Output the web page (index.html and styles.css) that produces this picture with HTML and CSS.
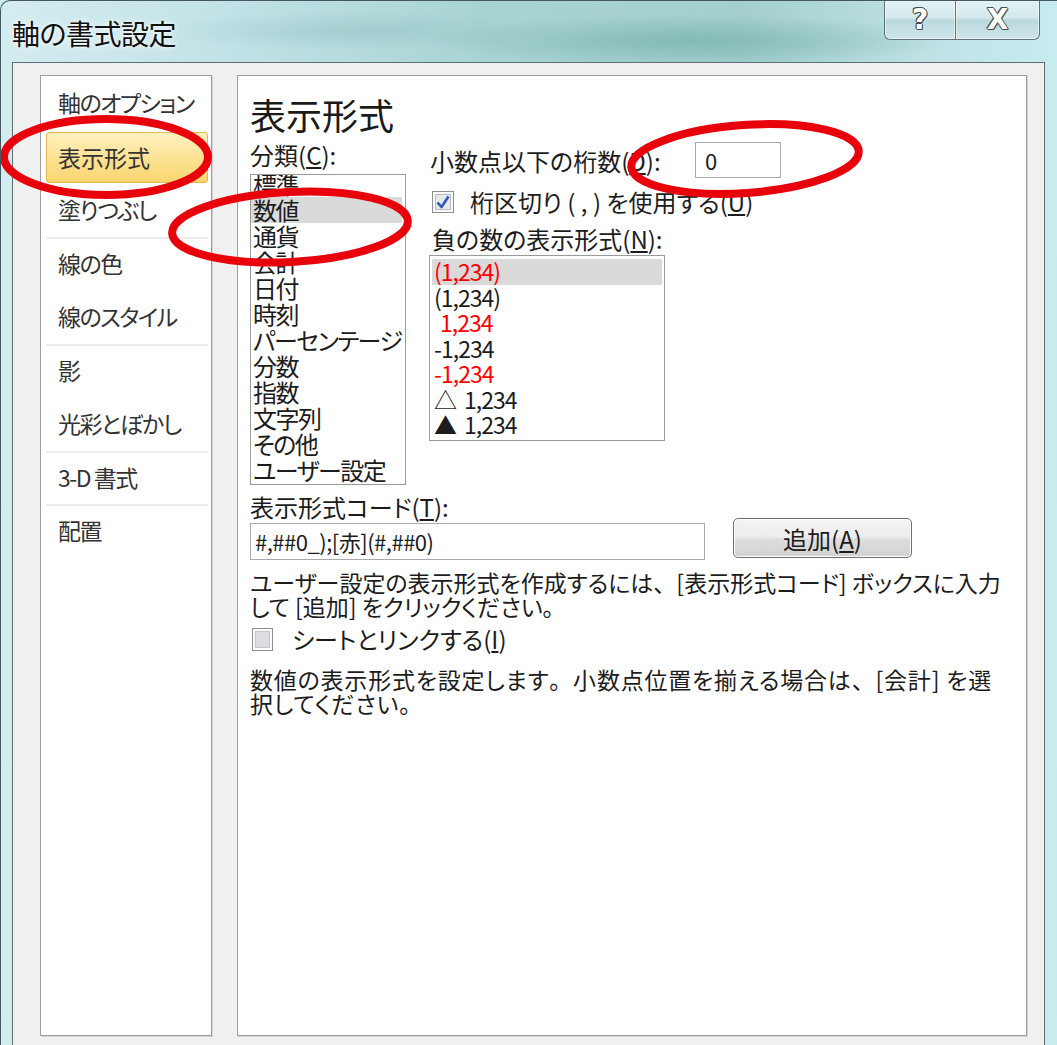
FILE: index.html
```html
<!DOCTYPE html>
<html lang="ja">
<head>
	<meta charset="UTF-8">
	<title>軸の書式設定</title>
	<link rel="stylesheet" href="styles.css">
</head>
<body>
	<div class="window">
		<div class="titlebar">
			<span class="title">軸の書式設定</span>
			<div class="caption-btns">
				<span class="cap-btn help">?</span>
				<span class="cap-btn close">X</span>
			</div>
		</div>

		<div class="client">
			<!-- 左側のメニュー -->
			<div class="panel nav-panel">
				<ul class="nav">
					<li>軸のオプション</li>
					<li class="active">表示形式</li>
					<li class="grp-end">塗りつぶし</li>
					<li>線の色</li>
					<li class="grp-end">線のスタイル</li>
					<li>影</li>
					<li class="grp-end">光彩とぼかし</li>
					<li class="grp-end">3-D 書式</li>
					<li>配置</li>
				</ul>
			</div>

			<!-- 表示形式ページ -->
			<div class="panel page">
				<h1 class="page-title">表示形式</h1>
				<div class="cols">
					<div class="cat-col">
						<div class="label">分類(<u>C</u>):</div>
						<div class="listbox cat-list">
							<ul>
								<li>標準</li>
								<li class="sel">数値</li>
								<li>通貨</li>
								<li>会計</li>
								<li>日付</li>
								<li>時刻</li>
								<li>パーセンテージ</li>
								<li>分数</li>
								<li>指数</li>
								<li>文字列</li>
								<li>その他</li>
								<li>ユーザー設定</li>
							</ul>
						</div>
					</div>
					<div class="opt-col">
						<div class="decimals">
							<span>小数点以下の桁数(<u>D</u>):</span>
							<div class="textbox small">0</div>
						</div>
						<div class="check-row first-check">
							<span class="checkbox">
								<svg width="22" height="22" viewBox="0 0 22 22">
									<rect x="0.5" y="0.5" width="21" height="21" fill="#fafafa" stroke="#8e8f8f"/>
									<rect x="3.5" y="3.5" width="15" height="15" fill="#e6e8ec" stroke="#b9bcc2"/>
									<path d="M5.5 11.5 L9.5 16 L16.5 5.5" fill="none" stroke="#2d56b8" stroke-width="2.6" stroke-linejoin="round"/>
								</svg>
							</span>
							<span>桁区切り ( , ) を使用する(<u>U</u>)</span>
						</div>
						<div class="label neg-label">負の数の表示形式(<u>N</u>):</div>
						<div class="listbox neg-list">
							<ul>
								<li class="sel red">(1,234)</li>
								<li>(1,234)</li>
								<li class="red indent">1,234</li>
								<li>-1,234</li>
								<li class="red">-1,234</li>
								<li><span class="tri">△</span>1,234</li>
								<li><span class="tri">▲</span>1,234</li>
							</ul>
						</div>
					</div>
				</div>

				<div class="label code-label">表示形式コード(<u>T</u>):</div>
				<div class="code-row">
					<div class="textbox code">#,##0_);[赤](#,##0)</div>
					<button class="btn">追加(<u>A</u>)</button>
				</div>
				<p class="desc">ユーザー設定の表示形式を作成するには<span class="fw">、</span>[表示形式コード] ボックスに入力<br>して [追加] をクリックください<span class="fw">。</span></p>
				<div class="check-row link-check">
					<span class="checkbox">
						<svg width="21" height="23" viewBox="0 0 21 23">
							<rect x="0.5" y="0.5" width="20" height="22" fill="#fafafa" stroke="#8e8f8f"/>
							<rect x="3.5" y="3.5" width="14" height="16" fill="#dcdde0" stroke="#c4c6ca"/>
						</svg>
					</span>
					<span>シートとリンクする(<u>I</u>)</span>
				</div>
				<p class="desc desc-bottom">数値の表示形式を設定します<span class="fw">。</span>小数点位置を揃える場合は<span class="fw">、</span>[会計] を選<br>択してください<span class="fw">。</span></p>
			</div>
		</div>

		<!-- 赤い丸の注釈 -->
		<svg class="marks" width="1057" height="1045" viewBox="0 0 1057 1045">
			<g fill="none" stroke="#e8000a" stroke-width="8">
				<ellipse cx="106" cy="157" rx="102" ry="38"/>
				<ellipse cx="290" cy="227" rx="118" ry="35" transform="rotate(-3 290 227)"/>
				<ellipse cx="745" cy="159" rx="114" ry="34" transform="rotate(-4 745 159)"/>
			</g>
		</svg>
	</div>
</body>
</html>
```

FILE: styles.css
```css
body{
	margin: 0;
	background: #c8eef0;
	font-family: "Noto Sans CJK JP", "Noto Sans", sans-serif;
	font-feature-settings: "palt";
	color: #1c1c1c;
}
.window{
	position: relative;
	display: flex;
	flex-direction: column;
	width: 1057px;
	height: 1045px;
	box-sizing: border-box;
	overflow: hidden;
	border-top: 1px solid #46585f;
	border-left: 1px solid #46585f;
	border-radius: 10px 0 0 0;
	background:
		radial-gradient(ellipse 260px 26px at 690px 40px, rgba(120, 178, 172, .75), rgba(120, 178, 172, 0)),
		radial-gradient(ellipse 200px 20px at 360px 30px, rgba(150, 196, 196, .6), rgba(150, 196, 196, 0)),
		linear-gradient(90deg, #d3ecf0 0%, #c3e3e7 20%, #a9d4d4 45%, #a3cfcd 70%, #bfe2e5 88%, #c6ecef 100%);
}
.titlebar{
	display: flex;
	height: 61px;
	flex-shrink: 0;
}
.title{
	align-self: center;
	padding-left: 11px;
	padding-top: 2px;
	font-size: 28px;
	letter-spacing: -.5px;
	color: #101010;
	text-shadow: 0 0 8px rgba(255, 255, 255, .9), 0 0 3px rgba(255, 255, 255, .9);
}
.caption-btns{
	display: flex;
	margin-left: auto;
	margin-right: 17px;
	margin-top: -1px;
	height: 41px;
}
.cap-btn{
	display: flex;
	align-items: center;
	justify-content: center;
	height: 40px;
	box-sizing: border-box;
	border: 1px solid rgba(55, 75, 85, .75);
	border-top: none;
	background: linear-gradient(#e4f2f4 0%, #d3e9ec 45%, #b9d9dd 52%, #cde6ea 100%);
	box-shadow: inset 0 0 0 1px rgba(255, 255, 255, .55);
	font-family: "DejaVu Sans", sans-serif;
	font-weight: bold;
	font-size: 28px;
	color: #fff;
	text-shadow: 1px 0 0 #4a4a4a, -1px 0 0 #4a4a4a, 0 1px 0 #4a4a4a, 0 -1px 0 #4a4a4a, 1px 1px 0 #4a4a4a, -1px -1px 0 #4a4a4a;
}
.help{
	width: 71px;
	border-radius: 0 0 0 6px;
	border-right: none;
}
.close{
	width: 85px;
	border-radius: 0 0 6px 0;
}

.client{
	flex: 1;
	display: grid;
	grid-template-columns: 172px 790px;
	column-gap: 25px;
	margin: 0 12px 0 11px;
	padding: 12px 0 9px 27px;
	box-sizing: border-box;
	border: 1px solid #5c6f76;
	border-bottom: none;
	background: #f0f0f0;
}
.panel{
	box-sizing: border-box;
	background: #fff;
	border: 1px solid #9d9da3;
	box-shadow: 1px 1px 0 #d4d4d8;
}

/* 左メニュー */
.nav{
	list-style: none;
	margin: 0;
	padding: 0 3px 0 5px;
}
.nav li{
	position: relative;
	height: 53.5px;
	box-sizing: border-box;
	padding-left: 12px;
	line-height: 53px;
	font-size: 23px;
	letter-spacing: -1.5px;
	white-space: nowrap;
	color: #333;
}
.nav li.grp-end{
	box-shadow: 0 2px 0 #ececec;
}
.nav li.active{
	height: 51px;
	margin-top: 2px;
	margin-bottom: .5px;
	padding-left: 11px;
	line-height: 49px;
	letter-spacing: 0;
	border: 1px solid #e2b850;
	border-radius: 3px;
	background: linear-gradient(#fff1bf 0%, #fde49a 45%, #fbd670 100%);
}

/* ページ */
.page{
	padding: 18px 12px 0 12px;
}
.page-title{
	margin: 0;
	font-size: 36px;
	font-weight: normal;
	line-height: 40px;
	color: #1a1a1a;
}
.label{
	font-size: 24px;
	line-height: 26px;
}
.cols{
	display: flex;
	column-gap: 23px;
	margin-top: 8px;
}
.cat-col{
	width: 156px;
}
.listbox{
	box-sizing: border-box;
	overflow: hidden;
	background: #fff;
	border: 1px solid #9a9a9a;
}
.listbox ul{
	list-style: none;
	margin: 0;
	padding: 0;
}
.cat-list{
	height: 311px;
	margin-top: 6px;
}
.cat-list ul{
	margin: -4px 3px 0 0;
}
.cat-list li{
	padding-left: 2px;
	font-size: 24px;
	line-height: 26px;
	letter-spacing: -1.5px;
	white-space: nowrap;
}
.sel{
	background: #dadada;
}

.opt-col{
	width: 352px;
}
.decimals{
	display: flex;
	align-items: center;
	justify-content: space-between;
	height: 36px;
	padding-left: 1px;
	font-size: 24px;
}
.textbox{
	box-sizing: border-box;
	background: #fff;
	border: 1px solid #a9a9ad;
	font-size: 22px;
	white-space: nowrap;
}
.textbox.small{
	width: 86px;
	height: 36px;
	padding-left: 9px;
	line-height: 34px;
}
.check-row{
	display: flex;
	align-items: center;
	height: 24px;
	font-size: 24px;
	line-height: 24px;
}
.checkbox{
	display: flex;
}
.first-check{
	gap: 16px;
	margin-top: 12px;
	padding-left: 3px;
}
.neg-label{
	margin-top: 12px;
	padding-left: 3px;
}
.neg-list{
	width: 236px;
	height: 186px;
	margin-top: 3px;
	padding: 3px 2px 0;
}
.neg-list li{
	padding-left: 2px;
	font-size: 23px;
	line-height: 25.5px;
	letter-spacing: -1px;
}
.neg-list li.indent{
	padding-left: 8px;
}
.red{
	color: #f00;
}
.tri{
	display: inline-block;
	width: 30px;
	letter-spacing: 0;
}

.code-label{
	margin-top: 9px;
}
.code-row{
	display: flex;
	align-items: flex-start;
	margin-top: -2px;
}
.textbox.code{
	width: 455px;
	height: 37px;
	margin-top: 5px;
	padding-left: 4px;
	line-height: 35px;
	letter-spacing: -.5px;
}
.btn{
	width: 179px;
	height: 40px;
	margin-left: 28px;
	padding: 0;
	border: 1px solid #707070;
	border-radius: 5px;
	background: linear-gradient(#f4f4f4 0%, #ececec 48%, #dedede 52%, #d2d2d2 100%);
	box-shadow: inset 0 0 0 1px #fcfcfc;
	font-family: inherit;
	font-feature-settings: "palt";
	font-size: 24px;
	color: #1c1c1c;
}
.desc{
	margin: 10px 0 0;
	font-size: 23px;
	line-height: 24px;
	white-space: nowrap;
	color: #1c1c1c;
}
.fw{
	font-feature-settings: normal;
}
.link-check{
	gap: 19px;
	margin-top: 9px;
	padding-left: 2px;
}
.desc-bottom{
	margin-top: 16px;
	letter-spacing: .8px;
}

.marks{
	position: absolute;
	left: -1px;
	top: -1px;
	pointer-events: none;
}
```
